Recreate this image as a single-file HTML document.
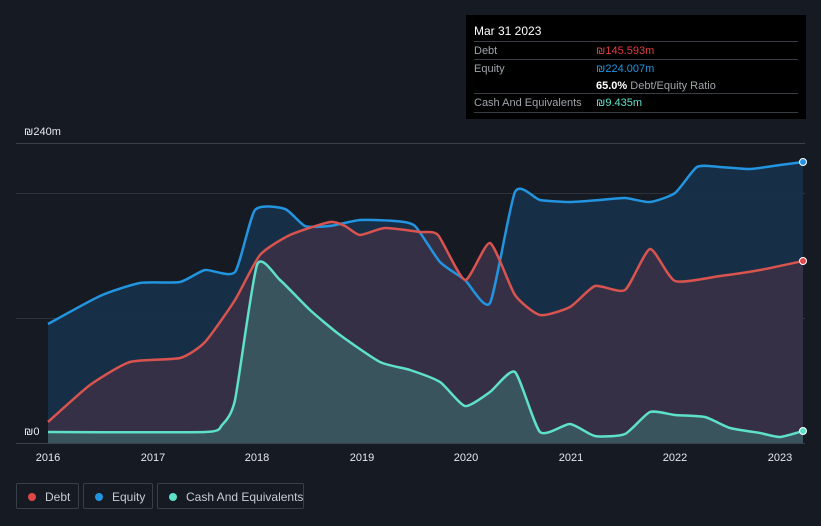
<!DOCTYPE html><html><head><style>
body{margin:0;width:821px;height:526px;background:#151a23;font-family:"Liberation Sans",sans-serif;overflow:hidden;position:relative}
.t{position:absolute;left:466px;top:15px;width:340px;height:104px;background:#000;color:#fff;font-size:11px}
.r{position:absolute;left:8px;right:8px;border-top:1px solid #3a3d44;height:18px;line-height:18px}
.l{color:#a0a4ab;position:absolute;left:0}.v{position:absolute;left:122px}
.lg{position:absolute;top:483px;height:26px;border:1px solid #3a3e48;border-radius:2px;color:#c8ccd2;font-size:12px;line-height:26px;padding-left:28px;box-sizing:border-box;white-space:nowrap}
.lg i{position:absolute;left:11px;top:9px;width:8px;height:8px;border-radius:50%}
</style></head><body>
<svg width="821" height="526" style="position:absolute;left:0;top:0">
<g stroke="#2c313b" stroke-width="1"><line x1="16" y1="143.5" x2="805" y2="143.5" stroke="#3b404a"/><line x1="16" y1="193.5" x2="805" y2="193.5"/><line x1="16" y1="318.5" x2="805" y2="318.5"/><line x1="16" y1="443.5" x2="805" y2="443.5" stroke="#3b404a"/></g>
<path id="ea" fill="#16324a" opacity="0.9"/>
<path id="da" fill="#3a3146" opacity="0.9"/>
<path id="ca" fill="#3a5a62" opacity="0.85"/>
<g fill="none" stroke-width="2.5" stroke-linejoin="round">
<path id="el" stroke="#2394df"/>
<path id="dl" stroke="#d9534f"/>
<path id="cl" stroke="#5ee0c9"/>
</g>
<circle cx="803" cy="162" r="3.5" fill="#2394df" stroke="#fff" stroke-width="1"/>
<circle cx="803" cy="261" r="3.5" fill="#e04848" stroke="#fff" stroke-width="1"/>
<circle cx="803" cy="431" r="3.5" fill="#5ee0c9" stroke="#fff" stroke-width="1"/>
<g fill="#e6e8eb" font-size="11" font-family="Liberation Sans"><text x="24" y="135">₪240m</text><text x="24" y="435">₪0</text>
<g text-anchor="middle"><text x="48" y="461">2016</text><text x="153" y="461">2017</text><text x="257" y="461">2018</text><text x="362" y="461">2019</text><text x="466" y="461">2020</text><text x="571" y="461">2021</text><text x="675" y="461">2022</text><text x="780" y="461">2023</text></g></g>
</svg>
<div class="t"><div style="position:absolute;left:8px;top:9px;font-size:12px">Mar 31 2023</div>
<div class="r" style="top:26px"><span class="l">Debt</span><span class="v" style="color:#e03e3e">₪145.593m</span></div>
<div class="r" style="top:44px"><span class="l">Equity</span><span class="v" style="color:#2394df">₪224.007m</span></div>
<div class="r" style="top:62px;border:0"><span class="v"><b>65.0%</b> <span style="color:#a0a4ab">Debt/Equity Ratio</span></span></div>
<div class="r" style="top:78px;border-bottom:1px solid #3a3d44"><span class="l">Cash And Equivalents</span><span class="v" style="color:#5ee0c9">₪9.435m</span></div></div>
<div class="lg" style="left:16px;width:63px"><i style="background:#e04848"></i>Debt</div>
<div class="lg" style="left:83px;width:70px"><i style="background:#2394df"></i>Equity</div>
<div class="lg" style="left:157px;width:147px"><i style="background:#5ee0c9"></i>Cash And Equivalents</div>
<script>
function sm(p){var d="M"+p[0][0]+","+p[0][1];for(var i=0;i<p.length-1;i++){var a=p[i-1]||p[i],b=p[i],c=p[i+1],e=p[i+2]||c;var t=0.1;var c1x=b[0]+(c[0]-a[0])*t,c1y=b[1]+(c[1]-a[1])*t,c2x=c[0]-(e[0]-b[0])*t,c2y=c[1]-(e[1]-b[1])*t;d+=" C"+c1x+","+c1y+" "+c2x+","+c2y+" "+c[0]+","+c[1];}return d;}
function P(s){return s.trim().split(/\s+/).map(function(x){return x.split(",").map(Number)});}
var E=P("48,324 100,296 140,283 180,282 205,270 235,272 255,210 285,209 305,226 330,226 360,220 395,221 415,226 440,262 465,280 490,303 515,192 540,200 570,202 600,200 625,198 650,202 675,193 697,167 720,167 750,169 780,165 803,162");
var D=P("48,422 90,385 130,362 180,358 205,342 235,300 260,255 290,235 330,222 345,226 360,235 385,228 420,232 438,235 465,280 490,243 515,295 540,315 570,307 595,286 625,290 650,249 675,281 720,276 760,270 803,261");
var C=P("48,432 205,432 222,425 235,400 257,265 280,280 310,310 340,335 380,362 410,370 440,382 465,406 490,392 515,372 540,432 570,424 595,436 625,434 650,412 675,415 705,417 730,428 760,433 780,437 803,431");
[["e",E],["d",D],["c",C]].forEach(function(k){var s=sm(k[1]);document.getElementById(k[0]+"l").setAttribute("d",s);document.getElementById(k[0]+"a").setAttribute("d",s+" L803,443 L48,443Z");});
</script>
</body></html>
